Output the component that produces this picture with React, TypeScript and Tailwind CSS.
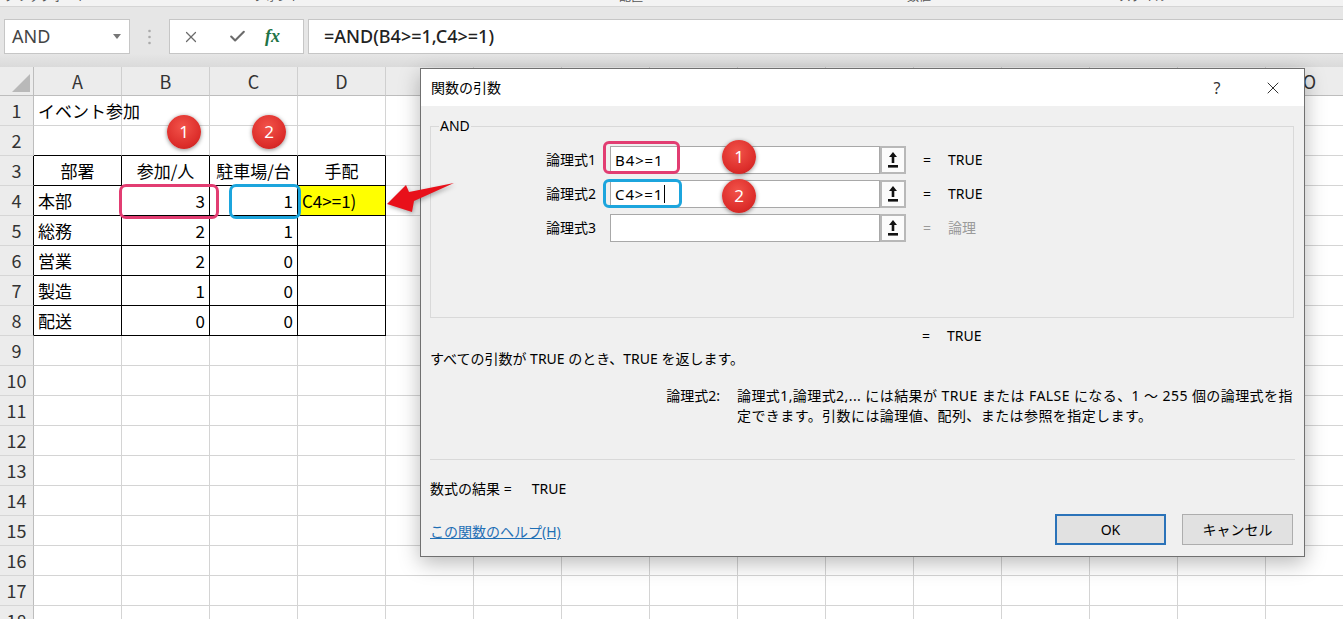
import { X, Check } from 'lucide-react';

const COLS = ['A', 'B', 'C', 'D', 'E', 'F', 'G', 'H', 'I', 'J', 'K', 'L', 'M', 'N', 'O'];
// headers hidden behind the dialog keep their cell but show no letter
const SHOWN = ['A', 'B', 'C', 'D', 'O'];
const ROWS = Array.from({ length: 18 }, (_, i) => i + 1);

type Cell = { v: string; align: 'l' | 'r' | 'c'; yellow?: boolean };

const sheet: Record<number, Cell[]> = {
  1: [{ v: 'イベント参加', align: 'l' }],
  3: [
    { v: '部署', align: 'c' },
    { v: '参加/人', align: 'c' },
    { v: '駐車場/台', align: 'c' },
    { v: '手配', align: 'c' },
  ],
  4: [
    { v: '本部', align: 'l' },
    { v: '3', align: 'r' },
    { v: '1', align: 'r' },
    { v: 'C4>=1)', align: 'l', yellow: true },
  ],
  5: [{ v: '総務', align: 'l' }, { v: '2', align: 'r' }, { v: '1', align: 'r' }],
  6: [{ v: '営業', align: 'l' }, { v: '2', align: 'r' }, { v: '0', align: 'r' }],
  7: [{ v: '製造', align: 'l' }, { v: '1', align: 'r' }, { v: '0', align: 'r' }],
  8: [{ v: '配送', align: 'l' }, { v: '0', align: 'r' }, { v: '0', align: 'r' }],
};

const Badge = ({ n, className }: { n: number; className: string }) => (
  <div
    className={
      'absolute w-[34px] h-[34px] rounded-full flex items-center justify-center text-white text-[17px] bg-[radial-gradient(circle_at_45%_35%,#f2534a,#dc2d2a_65%,#b91c1c)] shadow-[0_1px_4px_rgba(0,0,0,0.45)] ' +
      className
    }
  >
    {n}
  </div>
);

const RefButton = () => (
  <div className="w-[26px] h-[28px] border-2 border-[#b8b8b8] bg-[#fbfbfb] flex items-center justify-center">
    <svg width="10" height="16" viewBox="0 0 10 16">
      <polygon points="5,0 9,5 6.3,5 6.3,11 3.7,11 3.7,5 1,5" fill="#111" />
      <rect x="0" y="13" width="10" height="2.6" fill="#111" />
    </svg>
  </div>
);

const ArgRow = ({ label, value, result, muted, caret }: { label: string; value: string; result: string; muted?: boolean; caret?: boolean }) => (
  <div className="flex items-center h-[28px]">
    <div className="w-[165px] text-right">{label}</div>
    <div className="ml-[14px] w-[270px] h-[28px] bg-white border border-[#a8a8a8] flex items-center pl-[4px] text-[15px] tracking-[0.06em]">
      {value}
      {caret && <span className="ml-[1px] h-[18px] border-l border-black" />}
    </div>
    <RefButton />
    <span className={'ml-[17px] ' + (muted ? 'text-[#9a9a9a]' : '')}>=</span>
    <span className={'ml-[17px] ' + (muted ? 'text-[#9a9a9a]' : '')}>{result}</span>
  </div>
);

export default function App() {
  return (
    <div className="relative w-[1343px] h-[619px] overflow-hidden bg-white text-black font-['Noto_Sans','Noto_Sans_CJK_JP',sans-serif]">
      {/* ribbon remnants */}
      <div className="h-[7px] bg-[#f3f3f3] border-b border-[#d5d5d5] overflow-hidden flex text-[12px] text-[#555] leading-[14px]">
        <span className="-mt-[10px] ml-[4px]">クリップボード</span>
        <span className="-mt-[10px] ml-[165px]">フォント</span>
        <span className="-mt-[10px] ml-[318px]">配置</span>
        <span className="-mt-[10px] ml-[264px]">数値</span>
        <span className="-mt-[10px] ml-[188px]">スタイル</span>
      </div>

      {/* formula bar */}
      <div className="h-[60px] bg-[linear-gradient(#e6e6e6_78%,#dadada)] flex items-start pt-[12px]">
        <div className="ml-[4px] w-[126px] h-[35px] bg-white border border-[#c6c6c6] flex items-center pl-[7px] text-[18px] text-[#444]">
          AND
          <svg className="ml-auto mr-[8px]" width="8" height="5" viewBox="0 0 8 5">
            <polygon points="0,0 8,0 4,5" fill="#777" />
          </svg>
        </div>
        <div className="w-[39px] h-[35px] flex items-center justify-center">
          <svg width="3" height="16" viewBox="0 0 3 16">
            <circle cx="1.5" cy="2" r="1.3" fill="#aaa" />
            <circle cx="1.5" cy="8" r="1.3" fill="#aaa" />
            <circle cx="1.5" cy="14" r="1.3" fill="#aaa" />
          </svg>
        </div>
        <div className="w-[135px] h-[35px] bg-white border border-[#c6c6c6] flex items-center text-[#6b6b6b]">
          <X className="ml-[12px] w-[18px] h-[18px]" strokeWidth={1.6} />
          <Check className="ml-[28px] w-[19px] h-[19px]" strokeWidth={2.6} />
          <span className="ml-[18px] font-['Liberation_Serif',serif] italic text-[#217346] text-[18px] font-bold">fx</span>
        </div>
        <div className="ml-[4px] flex-1 h-[35px] bg-white border border-[#c6c6c6] border-r-0 flex items-center pl-[15px] text-[18px] font-medium text-[#222]">
          =AND(B4&gt;=1,C4&gt;=1)
        </div>
      </div>

      {/* sheet grid */}
      <div className="grid grid-cols-[34px_repeat(15,88px)] grid-rows-[29px_repeat(18,30px)] font-['Noto_Sans_CJK_JP',sans-serif]">
        <div className="bg-[#ececec] border-r border-b border-[#bdbdbd] flex items-end justify-end p-[3px]">
          <svg width="18" height="18" viewBox="0 0 18 18">
            <polygon points="18,0 18,18 0,18" fill="#b9b9b9" />
          </svg>
        </div>
        {COLS.map((c) => (
          <div key={c} className="bg-[#ececec] border-r border-b border-r-[#cfcfcf] border-b-[#bdbdbd] flex items-center justify-center text-[18px] text-[#333]">
            {SHOWN.includes(c) ? c : ''}
          </div>
        ))}
        {ROWS.map((r) => [
          <div
            key={'h' + r}
            className={
              'bg-[#ececec] border-b border-b-[#d6d6d6] border-r flex items-center justify-center text-[18px] text-[#333] ' +
              (r >= 3 && r <= 8 ? 'border-r-black' : 'border-r-[#bdbdbd]')
            }
          >
            {r}
          </div>,
          ...COLS.map((_, ci) => {
            const cell = sheet[r]?.[ci];
            const inTable = r >= 3 && r <= 8 && ci <= 3;
            const bottomBlack = r >= 2 && r <= 8 && ci <= 3;
            return (
              <div
                key={r + '-' + ci}
                className={[
                  'flex items-center px-[4px] whitespace-nowrap text-[17px] border-r border-b',
                  inTable ? 'border-r-black' : 'border-r-[#d4d4d4]',
                  bottomBlack ? 'border-b-black' : 'border-b-[#d4d4d4]',
                  cell?.align === 'r' ? 'justify-end' : cell?.align === 'c' ? 'justify-center' : 'justify-start',
                  cell?.yellow ? 'bg-[#ffff00]' : '',
                ].join(' ')}
              >
                {cell?.v}
              </div>
            );
          }),
        ])}
      </div>

      {/* annotations on the sheet */}
      <div className="absolute left-[119px] top-[184px] w-[100px] h-[35px] rounded-[7px] border-[3px] border-[#e23d72]" />
      <div className="absolute left-[229px] top-[184px] w-[72px] h-[35px] rounded-[7px] border-[3px] border-[#1ca5dd]" />
      <Badge n={1} className="left-[167px] top-[115px]" />
      <Badge n={2} className="left-[252px] top-[115px]" />

      {/* function arguments dialog */}
      <div className="absolute left-[420px] top-[68px] w-[885px] h-[489px] border border-[#707070] bg-[#f0f0f0] shadow-[0_6px_20px_rgba(0,0,0,0.28)] flex flex-col text-[14px] leading-[20px]">
        <div className="h-[37px] shrink-0 bg-white flex items-center pl-[10px]">
          <span>関数の引数</span>
          <span className="ml-auto w-[16px] text-center text-[16px] text-[#333]">?</span>
          <X className="ml-[38px] mr-[21px] w-[20px] h-[20px] text-[#333]" strokeWidth={1.2} />
        </div>

        <div className="relative shrink-0 mt-[20px] ml-[9px] w-[864px] h-[192px] border border-[#d9d9d9]">
          <span className="absolute left-[8px] -top-[11px] bg-[#f0f0f0] px-[1px]">AND</span>
          <div className="flex flex-col gap-[6px] pt-[19px]">
            <ArgRow label="論理式1" value="B4>=1" result="TRUE" />
            <ArgRow label="論理式2" value="C4>=1" result="TRUE" caret />
            <ArgRow label="論理式3" value="" result="論理" muted />
          </div>
        </div>

        <div className="mt-[8px] pl-[501px] flex">
          <span>=</span>
          <span className="ml-[17px]">TRUE</span>
        </div>
        <div className="mt-[3px] pl-[9px]">すべての引数が TRUE のとき、TRUE を返します。</div>
        <div className="mt-[17px] flex">
          <div className="w-[299px] text-right">論理式2:</div>
          <div className="ml-[17px] flex flex-col whitespace-nowrap tracking-[0.03em]">
            <span>論理式1,論理式2,... には結果が TRUE または FALSE になる、1 ～ 255 個の論理式を指</span>
            <span>定できます。引数には論理値、配列、または参照を指定します。</span>
          </div>
        </div>
        <div className="mt-[33px] ml-[9px] w-[865px] border-t border-[#d9d9d9]" />
        <div className="mt-[19px] pl-[9px] flex">
          <span>数式の結果 =</span>
          <span className="ml-[20px]">TRUE</span>
        </div>
        <div className="mt-[15px] pl-[9px] pr-[11px] flex items-center">
          <span className="mt-[4px] text-[#1f6fb5] underline">この関数のヘルプ(H)</span>
          <div className="ml-auto w-[111px] h-[31px] bg-[#e1e1e1] border-2 border-[#2b73b9] flex items-center justify-center">OK</div>
          <div className="ml-[16px] w-[111px] h-[31px] bg-[#e1e1e1] border border-[#adadad] flex items-center justify-center">キャンセル</div>
        </div>
      </div>

      {/* annotations drawn over the dialog */}
      <svg className="absolute left-[380px] top-[178px] drop-shadow-[1px_2px_2px_rgba(0,0,0,0.3)]" width="80" height="38" viewBox="0 0 80 38">
        <polygon points="7,26 26,7 29,14 74,5 34,23 32,34" fill="#e8101a" />
      </svg>
      <div className="absolute left-[603px] top-[141px] w-[77px] h-[33px] rounded-[6px] border-[3px] border-[#e23d72]" />
      <div className="absolute left-[603px] top-[179px] w-[79px] h-[29px] rounded-[6px] border-[3px] border-[#1ca5dd]" />
      <Badge n={1} className="left-[722px] top-[140px]" />
      <Badge n={2} className="left-[722px] top-[179px]" />
    </div>
  );
}
